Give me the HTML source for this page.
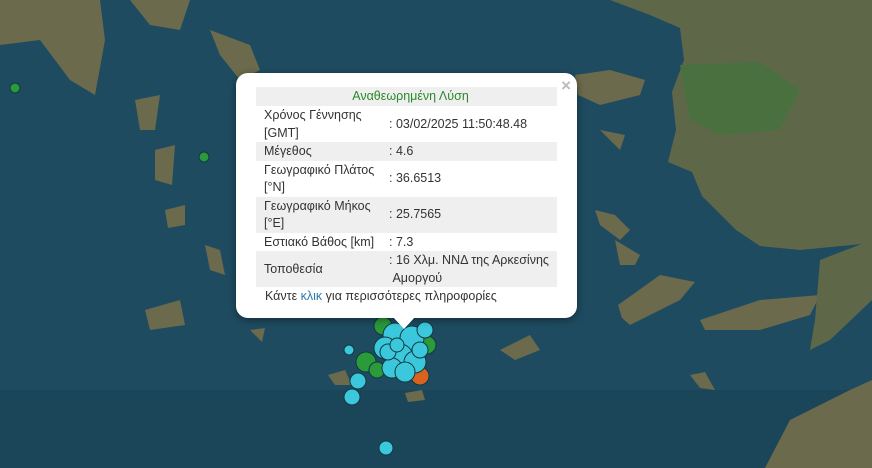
<!DOCTYPE html>
<html><head><meta charset="utf-8"><style>
body{margin:0;width:872px;height:468px;overflow:hidden;background:#1d4a5e;font-family:"Liberation Sans",Arial,sans-serif;position:relative}
svg{position:absolute;left:0;top:0}
.pop{position:absolute;left:236px;top:73px;width:341px;height:245px;background:#fff;border-radius:12px;box-shadow:0 2px 8px rgba(0,0,0,.4)}
.tip{position:absolute;left:393px;top:317px;width:0;height:0;border-left:11px solid transparent;border-right:11px solid transparent;border-top:12px solid #fff}
.x{position:absolute;right:6px;top:3px;color:#bbb;font-size:17px;font-weight:bold}
table{position:absolute;left:20px;top:14px;width:301px;border-collapse:collapse;font-size:12.5px;color:#333;line-height:17.5px}
td{padding:1px 0 0 8px;vertical-align:middle}
tr.g{background:#efefef}
.h{text-align:center;color:#2a8a2a;height:18px}
.f{position:absolute;left:29px;top:216px;font-size:12.5px;color:#333}
.f span{color:#2a7ab0}
table td:first-child{width:125px}
</style></head><body>
<svg width="872" height="468">
<rect width="872" height="468" fill="#1e4b60"/>
<rect x="0" y="390" width="872" height="78" fill="#1b4558"/>
<g fill="#6b6a4c">
<path d="M610,0 L650,15 L680,28 L684,60 L672,92 L676,130 L668,162 L692,172 L702,196 L736,230 L760,246 L800,250 L872,243 L872,0Z" fill="#5e6848"/>
<path d="M680,65 L760,62 L800,90 L780,130 L720,135 L690,120Z" fill="#4a7040"/>
<path d="M575,75 L610,70 L645,80 L640,95 L600,105 L578,95Z"/>
<path d="M618,305 L660,275 L695,282 L680,300 L630,325 L622,318Z"/>
<path d="M700,320 L760,300 L820,295 L810,315 L760,330 L705,330Z"/>
<path d="M820,260 L872,240 L872,300 L830,340 L810,350 L815,320Z" fill="#5e6848"/>
<path d="M765,468 L790,420 L850,390 L872,380 L872,468Z"/>
<path d="M0,0 L100,0 L105,40 L95,95 L70,80 L40,40 L0,45Z"/>
<path d="M130,0 L190,0 L180,30 L150,25Z"/>
<path d="M210,30 L250,45 L260,70 L240,80 L220,55Z"/>
<path d="M135,100 L160,95 L155,130 L140,130Z"/>
<path d="M155,150 L175,145 L172,185 L155,180Z"/>
<path d="M165,210 L185,205 L185,225 L168,228Z"/>
<path d="M205,245 L220,250 L225,275 L210,270Z"/>
<path d="M145,310 L180,300 L185,325 L150,330Z"/>
<path d="M600,130 L625,135 L620,150Z"/>
<path d="M595,210 L615,215 L630,230 L620,240 L600,225Z"/>
<path d="M615,240 L640,255 L635,265 L620,265Z"/>
<path d="M500,350 L530,335 L540,350 L515,360Z"/>
<path d="M328,375 L345,370 L352,385 L335,385Z"/>
<path d="M405,393 L422,390 L425,400 L408,402Z"/>
<path d="M690,375 L705,372 L715,390 L700,388Z"/>
<path d="M250,330 L265,328 L262,342Z"/>
</g>
<g stroke="#0f3a40" stroke-width="1">
<circle cx="15" cy="88" r="5" fill="#2a9a3a"/>
<circle cx="204" cy="157" r="5" fill="#2a9a3a"/>
<circle cx="383" cy="326" r="9" fill="#2a9a3a"/>
<circle cx="427" cy="345" r="9" fill="#2a9a3a"/>
<circle cx="420" cy="376" r="9" fill="#d8621e"/>
<circle cx="366" cy="362" r="10" fill="#2a9a3a"/>
<circle cx="377" cy="370" r="8" fill="#2a9a3a"/>
<circle cx="349" cy="350" r="5" fill="#3cc8dc"/>
<circle cx="358" cy="381" r="8" fill="#3cc8dc"/>
<circle cx="352" cy="397" r="8" fill="#3cc8dc"/>
<circle cx="386" cy="448" r="7" fill="#3cc8dc"/>
<circle cx="395" cy="335" r="12" fill="#3cc8dc"/>
<circle cx="412" cy="338" r="12" fill="#3cc8dc"/>
<circle cx="385" cy="348" r="11" fill="#3cc8dc"/>
<circle cx="400" cy="357" r="13" fill="#3cc8dc"/>
<circle cx="415" cy="362" r="11" fill="#3cc8dc"/>
<circle cx="392" cy="368" r="10" fill="#3cc8dc"/>
<circle cx="405" cy="372" r="10" fill="#3cc8dc"/>
<circle cx="388" cy="352" r="8" fill="#3cc8dc"/>
<circle cx="425" cy="330" r="8" fill="#3cc8dc"/>
<circle cx="420" cy="350" r="8" fill="#3cc8dc"/>
<circle cx="397" cy="345" r="7" fill="#3cc8dc"/>
</g>
</svg>
<div class="pop"><div class="x">×</div>
<table>
<tr class="g"><td colspan="2" class="h">Αναθεωρημένη Λύση</td></tr>
<tr><td>Χρόνος Γέννησης<br>[GMT]</td><td style="padding-left:0">: 03/02/2025 11:50:48.48</td></tr>
<tr class="g"><td>Μέγεθος</td><td style="padding-left:0">: 4.6</td></tr>
<tr><td>Γεωγραφικό Πλάτος<br>[°N]</td><td style="padding-left:0">: 36.6513</td></tr>
<tr class="g"><td>Γεωγραφικό Μήκος<br>[°E]</td><td style="padding-left:0">: 25.7565</td></tr>
<tr><td>Εστιακό Βάθος [km]</td><td style="padding-left:0">: 7.3</td></tr>
<tr class="g"><td>Τοποθεσία</td><td style="padding-left:0">: 16 Χλμ. ΝΝΔ της Αρκεσίνης<br>&nbsp;Αμοργού</td></tr>
</table>
<div class="f">Κάντε <span>κλικ</span> για περισσότερες πληροφορίες</div>
</div>
<div class="tip"></div>
</body></html>
